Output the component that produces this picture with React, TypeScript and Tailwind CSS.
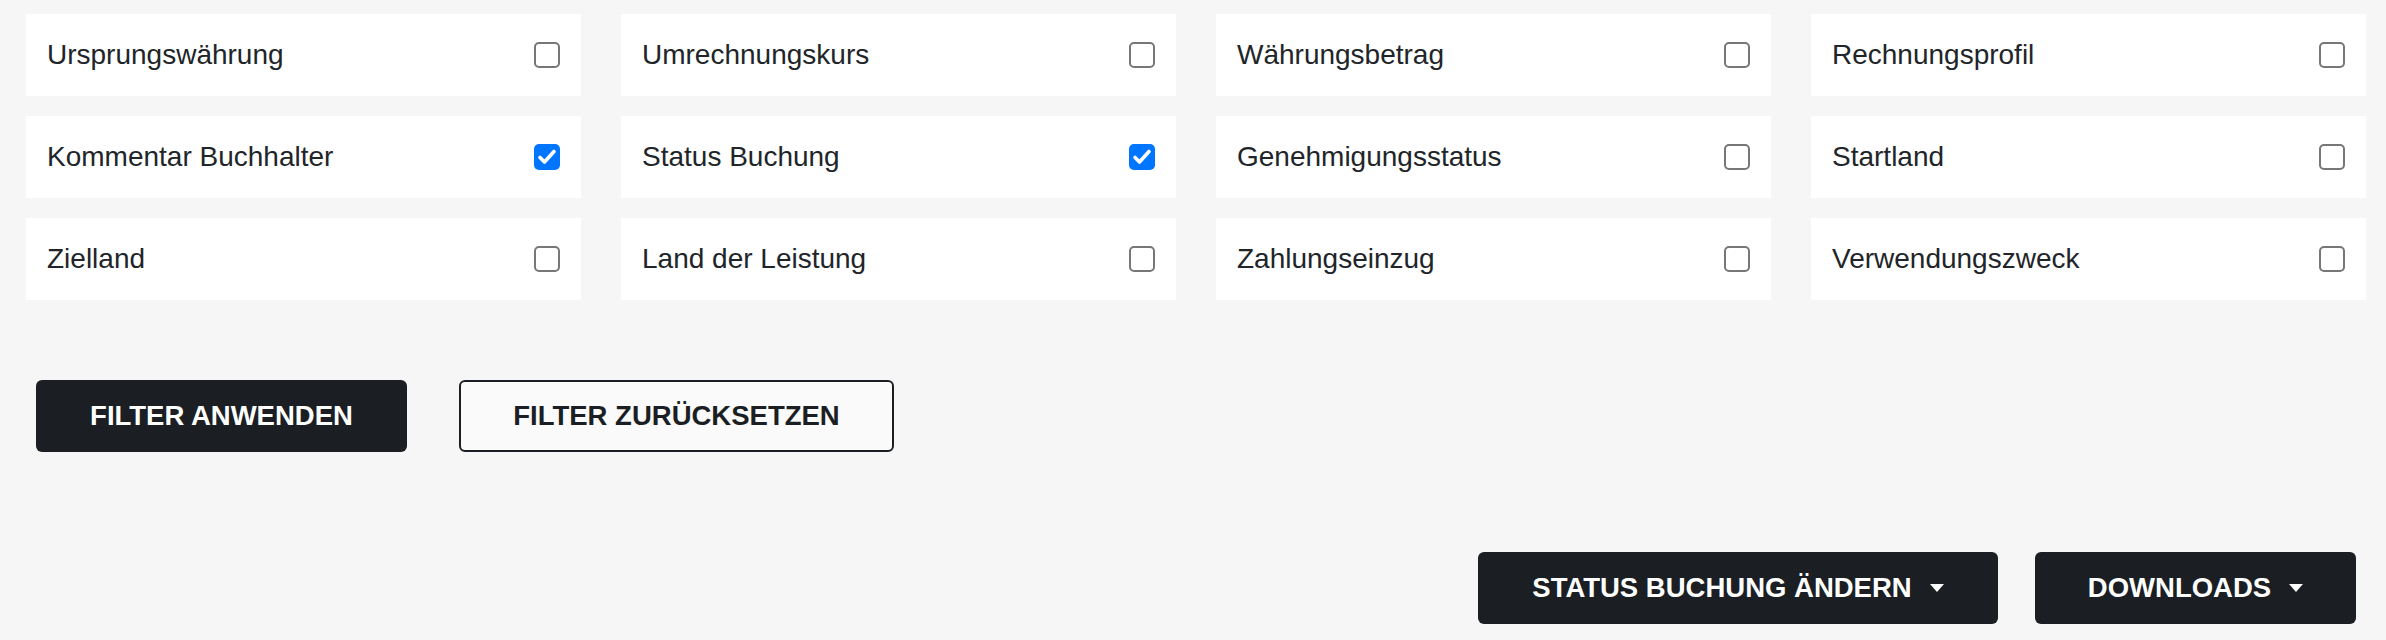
import React from "react";

const items: { label: string; checked: boolean }[] = [
  { label: "Ursprungswährung", checked: false },
  { label: "Umrechnungskurs", checked: false },
  { label: "Währungsbetrag", checked: false },
  { label: "Rechnungsprofil", checked: false },
  { label: "Kommentar Buchhalter", checked: true },
  { label: "Status Buchung", checked: true },
  { label: "Genehmigungsstatus", checked: false },
  { label: "Startland", checked: false },
  { label: "Zielland", checked: false },
  { label: "Land der Leistung", checked: false },
  { label: "Zahlungseinzug", checked: false },
  { label: "Verwendungszweck", checked: false },
];

function Box({ checked }: { checked: boolean }) {
  if (checked) {
    return (
      <span className="block h-[26px] w-[26px] rounded-[5px] bg-[#0075ff]">
        <svg width="26" height="26" viewBox="0 0 26 26">
          <path d="M6 13.5 L10.5 18 L20 7.5" fill="none" stroke="#fff" strokeWidth="3.6" strokeLinecap="round" strokeLinejoin="round" />
        </svg>
      </span>
    );
  }
  return <span className="block h-[26px] w-[26px] rounded-[5px] border-2 border-[#777777] bg-white" />;
}

function Caret() {
  return <span className="ml-[18px] inline-block h-0 w-0 border-x-[7px] border-t-[8px] border-x-transparent border-t-white" />;
}

export default function App() {
  return (
    <div
      className="min-h-[640px] w-full bg-[#f6f6f6] text-[#212529]"
      style={{ fontFamily: '"Liberation Sans", Arial, Helvetica, sans-serif' }}
    >
      <div className="grid grid-cols-4 gap-x-[40px] gap-y-[20px] pl-[26px] pr-[20px] pt-[14px]">
        {items.map((it) => (
          <label
            key={it.label}
            className="flex h-[82px] items-center justify-between bg-white pl-[21px] pr-[21px] text-[28px]"
          >
            <span>{it.label}</span>
            <Box checked={it.checked} />
          </label>
        ))}
      </div>

      <div className="mt-[80px] flex gap-[52px] pl-[36px]">
        <button className="h-[72px] w-[371px] rounded-[6px] bg-[#1b1f24] text-[27.5px] font-bold text-white">
          FILTER ANWENDEN
        </button>
        <button className="h-[72px] w-[435px] rounded-[6px] border-2 border-[#1b1f24] bg-[#fafafa] text-[27.5px] font-bold text-[#1b1f24]">
          FILTER ZURÜCKSETZEN
        </button>
      </div>

      <div className="mt-[100px] flex justify-end gap-[37px] pr-[30px]">
        <button className="flex h-[72px] w-[520px] items-center justify-center rounded-[6px] bg-[#1b1f24] text-[27.5px] font-bold text-white">
          STATUS BUCHUNG ÄNDERN
          <Caret />
        </button>
        <button className="flex h-[72px] w-[321px] items-center justify-center rounded-[6px] bg-[#1b1f24] text-[27.5px] font-bold text-white">
          DOWNLOADS
          <Caret />
        </button>
      </div>
    </div>
  );
}
